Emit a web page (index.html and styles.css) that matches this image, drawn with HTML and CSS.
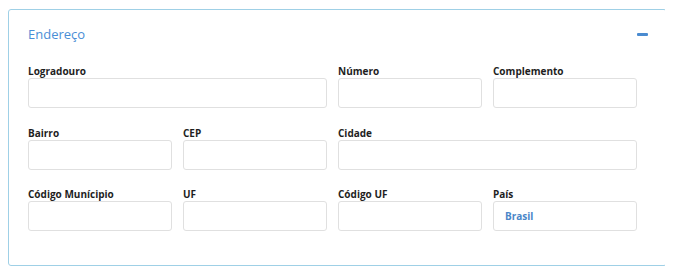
FILE: index.html
```html
<!DOCTYPE html>
<html lang="pt-BR">
<head>
    <meta charset="UTF-8">
    <meta name="viewport" content="width=device-width, initial-scale=1.0">
    <title>Endereço</title>
    <link rel="stylesheet" href="styles.css">
</head>
<body>
    <div class="panel">
        <div class="panel-head">
            <h2>Endereço</h2>
            <span class="toggle"></span>
        </div>
        <div class="fields">
            <div class="field span2">
                <label>Logradouro</label>
                <input type="text">
            </div>
            <div class="field">
                <label>Número</label>
                <input type="text">
            </div>
            <div class="field">
                <label>Complemento</label>
                <input type="text">
            </div>

            <div class="field">
                <label>Bairro</label>
                <input type="text">
            </div>
            <div class="field">
                <label>CEP</label>
                <input type="text">
            </div>
            <div class="field span2">
                <label>Cidade</label>
                <input type="text">
            </div>

            <div class="field">
                <label>Código Munícipio</label>
                <input type="text">
            </div>
            <div class="field">
                <label>UF</label>
                <input type="text">
            </div>
            <div class="field">
                <label>Código UF</label>
                <input type="text">
            </div>
            <div class="field">
                <label>País</label>
                <input type="text" class="filled" value="Brasil">
            </div>
        </div>
    </div>
</body>
</html>
```

FILE: styles.css
```css
*{
    margin: 0;
    padding: 0;
    box-sizing: border-box;
}
body{
    margin: 8px;
    font-family: "Open Sans", "Liberation Sans", sans-serif;
    background-color: #fff;
}
.panel{
    width: 659px;
    height: 257px;
    margin-top: 1px;
    border: 1px solid #9fd0e6;
    border-radius: 3px;
    padding: 14px 18px 0 19px;
}
.panel-head{
    display: flex;
    justify-content: space-between;
    align-items: center;
    height: 20px;
    margin-bottom: 20px;
}
.panel-head h2{
    font-size: 13px;
    font-weight: 400;
    color: #4a8ed6;
    line-height: 20px;
}
.toggle{
    width: 11px;
    height: 3px;
    background-color: #4a8bd0;
    border-radius: 1px;
}
.fields{
    width: 609px;
    display: grid;
    grid-template-columns: repeat(4, 144px);
    column-gap: 11px;
    row-gap: 17.5px;
}
.span2{
    grid-column: span 2;
}
.field label{
    display: block;
    font-size: 10px;
    font-weight: 700;
    color: #1e1e1e;
    line-height: 14px;
}
.field input{
    display: block;
    width: 100%;
    height: 30px;
    border: 1px solid #e0e0e0;
    border-radius: 3px;
    padding: 0 11px;
    outline: none;
    font-family: inherit;
    font-size: 10px;
    color: #333;
}
.field input.filled{
    color: #4a86c8;
    font-weight: 700;
}
```
